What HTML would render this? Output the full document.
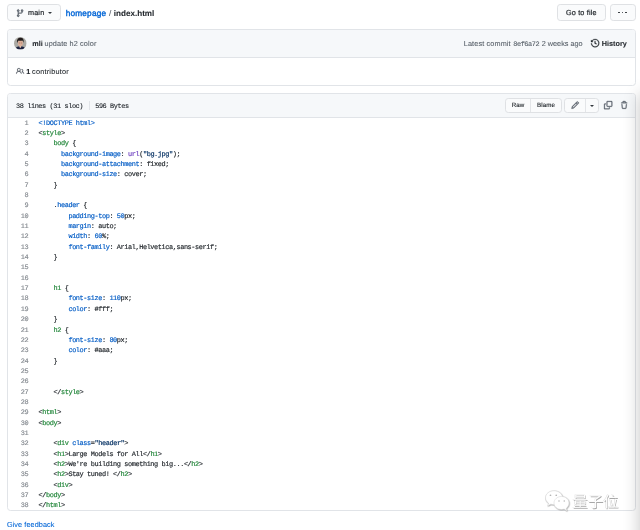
<!DOCTYPE html>
<html lang="en">
<head>
<meta charset="utf-8">
<title>homepage/index.html</title>
<style>
*{box-sizing:border-box;margin:0;padding:0}
html,body{width:640px;height:530px;overflow:hidden;background:#fff}
body{position:relative;text-rendering:geometricPrecision;font-family:"Liberation Sans","Noto Sans CJK SC",sans-serif;color:#24292e;font-size:7.25px;line-height:1}
#root{position:absolute;left:0;top:0;width:640px;height:530px;will-change:transform}
.abs{position:absolute;white-space:nowrap}
.btn{position:absolute;background:#fafbfc;border:1px solid #dfe1e4;border-radius:3.2px}
.box{position:absolute;border:1px solid #e1e4e8;border-radius:3.4px;background:#fff;overflow:hidden}
.hdr{position:absolute;left:0;right:0;top:0;background:#f6f8fa;border-bottom:1px solid #e1e4e8}
.t{position:absolute;white-space:nowrap;line-height:10px;height:10px;-webkit-text-stroke:0.08px currentColor}
.mono{font-family:"Liberation Mono",monospace}
.gray{color:#586069}
.blue{color:#0366d6}
.b6{font-weight:bold}
.dot{width:1.6px;height:1.6px;border-radius:50%;background:#24292e}
.med{-webkit-text-stroke:0.2px currentColor;color:#24292e}
.med.blue{color:#0366d6;-webkit-text-stroke-width:0.38px}
/* code */
#code{position:absolute;left:8px;top:118.63px;width:620px}
.ln{height:10.346px;line-height:10.346px;position:relative;white-space:pre;font-family:"Liberation Mono",monospace;font-size:6.9px;letter-spacing:-0.41px;color:#24292e;-webkit-text-stroke:0.17px currentColor}
.no{position:absolute;left:0;width:20.2px;text-align:right;color:#858a90;-webkit-text-stroke:0.16px currentColor}
.cd{position:absolute;left:30.6px}
.g{color:#22863a}.b{color:#005cc5}.s{color:#032f62}.p{color:#6f42c1}
svg{position:absolute;overflow:visible}
</style>
</head>
<body>
<div id="root">

<!-- top bar -->
<div class="btn" style="left:7px;top:4px;width:54px;height:17px"></div>
<svg style="left:16.2px;top:8.6px" width="8.3" height="8.3" viewBox="0 0 16 16"><path fill="#586069" stroke="#586069" stroke-width="0.55" fill-rule="evenodd" d="M11.75 2.5a.75.75 0 100 1.500.75.75 0 000-1.500zm-2.250.75a2.250 2.250 0 113 2.122V6A2.500 2.500 0 0110 8.500H6a1 1 0 00-1 1v1.128a2.251 2.251 0 11-1.500 0V5.372a2.250 2.250 0 111.500 0v1.836A2.492 2.492 0 016 7h4a1 1 0 001-1v-.628A2.250 2.250 0 019.500 3.250zM4.250 12a.75.75 0 100 1.500.75.75 0 000-1.500zM3.500 3.250a.75.75 0 111.500 0 .75.75 0 01-1.500 0z"/></svg>
<div class="t med" style="left:28px;top:7.8px;font-size:7.25px;letter-spacing:0.15px">main</div>
<div class="abs" style="left:48.3px;top:12.2px;width:0;height:0;border-left:2.1px solid transparent;border-right:2.1px solid transparent;border-top:2.3px solid #33383d"></div>
<div class="t med blue" style="left:65.7px;top:9.1px;font-size:8.28px;letter-spacing:0.19px">homepage</div><div class="t gray" style="left:108.9px;top:9.1px;font-size:8.28px">/</div><div class="t b6" style="left:113.8px;top:9.1px;font-size:8.1px">index.html</div>

<div class="btn" style="left:557px;top:4px;width:48.6px;height:17px"></div>
<div class="t med" style="left:566px;top:7.8px;font-size:7.25px;letter-spacing:0.16px">Go to file</div>
<div class="btn" style="left:610px;top:4px;width:25.6px;height:17px"></div>
<div class="abs dot" style="left:618.2px;top:11.8px"></div><div class="abs dot" style="left:621.8px;top:11.8px"></div><div class="abs dot" style="left:625.4px;top:11.8px"></div>

<!-- commit box -->
<div class="box" style="left:7px;top:29px;width:629px;height:56.5px">
  <div class="hdr" style="height:28px"></div>
</div>
<svg style="left:13.6px;top:37.2px" width="12.6" height="12.6" viewBox="0 0 126 126">
 <defs><clipPath id="avc"><circle cx="63" cy="63" r="63"/></clipPath><filter id="avb" x="-20%" y="-20%" width="140%" height="140%"><feGaussianBlur stdDeviation="4"/></filter></defs>
 <g clip-path="url(#avc)">
  <rect width="126" height="126" fill="#aaa9a4"/>
  <g filter="url(#avb)">
   <path d="M14 126c2-24 18-34 49-34s47 10 49 34z" fill="#1e2240"/>
   <path d="M53 84h20l-2 18-8 8-8-8z" fill="#e6c2ad"/>
   <ellipse cx="64" cy="60" rx="25" ry="31" fill="#dcae98"/>
   <path d="M32 60c-8-32 8-52 33-52 26 0 38 20 30 52-2-15-6-23-13-26-10 4-26 5-36 1-6 6-12 14-14 25z" fill="#231d1b"/>
   <path d="M48 60h12M68 60h12" stroke="#5a4038" stroke-width="4"/>
  </g>
 </g>
</svg>
<div class="t b6" style="left:32.2px;top:38.9px">mli</div><div class="t gray" style="left:44.5px;top:38.9px;letter-spacing:0.13px">update h2 color</div>
<div class="t gray" style="left:463.75px;top:38.9px;letter-spacing:0.146px">Latest commit</div><div class="t gray mono" style="left:513.2px;top:40.4px;font-size:6.9px;letter-spacing:-0.41px;-webkit-text-stroke:0.1px currentColor">8ef6a72</div><div class="t gray" style="left:541.8px;top:38.9px">2 weeks ago</div>
<svg style="left:591.1px;top:39.1px" width="8.3" height="8.3" viewBox="0 0 16 16"><path fill="#24292e" stroke="#24292e" stroke-width="0.55" fill-rule="evenodd" d="M1.643 3.143L.427 1.927A.25.25 0 000 2.104V5.750c0 .138.112.25.25.25h3.646a.25.25 0 00.177-.427L2.715 4.215a6.500 6.500 0 11-1.180 4.458.75.75 0 10-1.493.154 8.001 8.001 0 101.600-5.684zM7.750 4a.75.75 0 01.75.75v2.992l2.028.812a.75.75 0 01-.557 1.392l-2.500-1A.75.75 0 017 8.250v-3.500A.75.75 0 017.750 4z"/></svg>
<div class="t b6" style="left:601.8px;top:38.9px">History</div>

<svg style="left:15.6px;top:67.2px" width="8.3" height="8.3" viewBox="0 0 16 16"><path fill="#586069" stroke="#586069" stroke-width="0.2" fill-rule="evenodd" d="M5.500 3.500a2 2 0 100 4 2 2 0 000-4zM2 5.500a3.500 3.500 0 115.898 2.549 5.507 5.507 0 013.034 4.084.75.75 0 11-1.482.235 4.001 4.001 0 00-7.900 0 .75.75 0 01-1.482-.236A5.507 5.507 0 013.102 8.050 3.490 3.490 0 012 5.500zM11 4a.75.75 0 100 1.500 1.500 1.500 0 01.666 2.844.75.75 0 00-.416.672v.352a.75.75 0 00.574.730c1.200.289 2.162 1.200 2.522 2.372a.75.75 0 101.434-.440 5.010 5.010 0 00-2.560-3.012A3 3 0 0011 4z"/></svg>
<div class="t b6" style="left:26.2px;top:67.2px">1</div><div class="t" style="left:32.1px;top:67.2px;letter-spacing:0.22px">contributor</div>

<!-- file box -->
<div class="box" style="left:7px;top:93px;width:629px;height:417.5px">
  <div class="hdr" style="height:24px"></div>
</div>
<div class="t mono" style="left:16px;top:101.9px;font-size:6.9px;letter-spacing:-0.41px;-webkit-text-stroke:0.12px currentColor">38 lines (31 sloc)<span style="display:inline-block;width:12.1px"></span>596 Bytes</div>
<div class="abs" style="left:88.8px;top:100.5px;width:1px;height:9.5px;background:#e1e4e8"></div>

<div class="btn" style="left:505px;top:98.4px;width:56.8px;height:14.6px"></div>
<div class="abs" style="left:530px;top:99px;width:1px;height:13.4px;background:#e3e5e8"></div>
<div class="t med" style="left:511.8px;top:101.4px;font-size:6.21px;-webkit-text-stroke-width:0.12px">Raw</div>
<div class="t med" style="left:536.9px;top:101.4px;font-size:6.21px;letter-spacing:0.14px;-webkit-text-stroke-width:0.12px">Blame</div>
<div class="btn" style="left:564.4px;top:98.4px;width:34.4px;height:14.6px"></div>
<div class="abs" style="left:585.2px;top:99px;width:1px;height:13.4px;background:#e3e5e8"></div>
<svg style="left:570.6px;top:101.4px" width="8.3" height="8.3" viewBox="0 0 16 16"><path fill="#586069" stroke="#586069" stroke-width="0.55" fill-rule="evenodd" d="M11.013 1.427a1.750 1.750 0 012.474 0l1.086 1.086a1.750 1.750 0 010 2.474l-8.610 8.610c-.210.210-.470.364-.756.445l-3.251.930a.75.75 0 01-.927-.928l.929-3.250a1.750 1.750 0 01.445-.758l8.610-8.610zm1.414 1.060a.25.25 0 00-.354 0L10.811 3.750l1.439 1.440 1.263-1.263a.25.250 0 000-.354l-1.086-1.086zM11.189 6.250L9.750 4.810l-6.286 6.287a.25.25 0 00-.064.108l-.558 1.953 1.953-.558a.249.249 0 00.108-.064l6.286-6.286z"/></svg>
<div class="abs" style="left:590px;top:104.6px;width:0;height:0;border-left:2.1px solid transparent;border-right:2.1px solid transparent;border-top:2.3px solid #33383d"></div>
<svg style="left:604px;top:100.9px" width="8.3" height="8.3" viewBox="0 0 16 16"><path fill="#586069" stroke="#586069" stroke-width="0.55" fill-rule="evenodd" d="M0 6.750C0 5.784.784 5 1.750 5h1.500a.75.75 0 010 1.500h-1.500a.25.25 0 00-.25.25v7.500c0 .138.112.25.25.25h7.500a.25.25 0 00.25-.25v-1.500a.75.75 0 011.500 0v1.500A1.750 1.750 0 019.250 16h-7.500A1.750 1.750 0 010 14.250v-7.500z"/><path fill="#586069" stroke="#586069" stroke-width="0.55" fill-rule="evenodd" d="M5 1.750C5 .784 5.784 0 6.750 0h7.500C15.216 0 16 .784 16 1.750v7.500A1.750 1.750 0 0114.250 11h-7.500A1.750 1.750 0 015 9.250v-7.500zm1.750-.25a.25.25 0 00-.25.25v7.500c0 .138.112.25.25.25h7.500a.25.25 0 00.25-.25v-7.500a.25.25 0 00-.25-.25h-7.500z"/></svg>
<svg style="left:619.8px;top:100.9px" width="8.3" height="8.3" viewBox="0 0 16 16"><path fill="#586069" stroke="#586069" stroke-width="0.55" fill-rule="evenodd" d="M6.500 1.750a.25.25 0 01.25-.25h2.500a.25.25 0 01.25.25V3h-3V1.750zm4.500 0V3h2.250a.75.75 0 010 1.500H2.750a.75.75 0 010-1.500H5V1.750C5 .784 5.784 0 6.750 0h2.500C10.216 0 11 .784 11 1.750zM4.496 6.675a.75.75 0 10-1.492.150l.66 6.600A1.750 1.750 0 005.405 15h5.190c.9 0 1.652-.681 1.741-1.576l.66-6.600a.75.75 0 00-1.492-.149l-.66 6.600a.25.25 0 01-.249.225h-5.190a.25.25 0 01-.249-.225l-.66-6.600z"/></svg>

<div id="code">
<div class="ln"><span class="no">1</span><span class="cd"><span class="b">&lt;!DOCTYPE html&gt;</span></span></div>
<div class="ln"><span class="no">2</span><span class="cd">&lt;<span class="g">style</span>&gt;</span></div>
<div class="ln"><span class="no">3</span><span class="cd">    <span class="g">body</span> {</span></div>
<div class="ln"><span class="no">4</span><span class="cd">      <span class="b">background-image</span>: <span class="p">url</span>(<span class="s">"bg.jpg"</span>);</span></div>
<div class="ln"><span class="no">5</span><span class="cd">      <span class="b">background-attachment</span>: fixed;</span></div>
<div class="ln"><span class="no">6</span><span class="cd">      <span class="b">background-size</span>: cover;</span></div>
<div class="ln"><span class="no">7</span><span class="cd">    }</span></div>
<div class="ln"><span class="no">8</span><span class="cd"></span></div>
<div class="ln"><span class="no">9</span><span class="cd">    .<span class="b">header</span> {</span></div>
<div class="ln"><span class="no">10</span><span class="cd">        <span class="b">padding-top</span>: <span class="b">50</span>px;</span></div>
<div class="ln"><span class="no">11</span><span class="cd">        <span class="b">margin</span>: auto;</span></div>
<div class="ln"><span class="no">12</span><span class="cd">        <span class="b">width</span>: <span class="b">60</span>%;</span></div>
<div class="ln"><span class="no">13</span><span class="cd">        <span class="b">font-family</span>: Arial,Helvetica,sans-serif;</span></div>
<div class="ln"><span class="no">14</span><span class="cd">    }</span></div>
<div class="ln"><span class="no">15</span><span class="cd"></span></div>
<div class="ln"><span class="no">16</span><span class="cd"></span></div>
<div class="ln"><span class="no">17</span><span class="cd">    <span class="g">h1</span> {</span></div>
<div class="ln"><span class="no">18</span><span class="cd">        <span class="b">font-size</span>: <span class="b">110</span>px;</span></div>
<div class="ln"><span class="no">19</span><span class="cd">        <span class="b">color</span>: #fff;</span></div>
<div class="ln"><span class="no">20</span><span class="cd">    }</span></div>
<div class="ln"><span class="no">21</span><span class="cd">    <span class="g">h2</span> {</span></div>
<div class="ln"><span class="no">22</span><span class="cd">        <span class="b">font-size</span>: <span class="b">80</span>px;</span></div>
<div class="ln"><span class="no">23</span><span class="cd">        <span class="b">color</span>: #aaa;</span></div>
<div class="ln"><span class="no">24</span><span class="cd">    }</span></div>
<div class="ln"><span class="no">25</span><span class="cd"></span></div>
<div class="ln"><span class="no">26</span><span class="cd"></span></div>
<div class="ln"><span class="no">27</span><span class="cd">    &lt;/<span class="g">style</span>&gt;</span></div>
<div class="ln"><span class="no">28</span><span class="cd"></span></div>
<div class="ln"><span class="no">29</span><span class="cd">&lt;<span class="g">html</span>&gt;</span></div>
<div class="ln"><span class="no">30</span><span class="cd">&lt;<span class="g">body</span>&gt;</span></div>
<div class="ln"><span class="no">31</span><span class="cd"></span></div>
<div class="ln"><span class="no">32</span><span class="cd">    &lt;<span class="g">div</span> <span class="b">class</span>=<span class="s">"header"</span>&gt;</span></div>
<div class="ln"><span class="no">33</span><span class="cd">    &lt;<span class="g">h1</span>&gt;Large Models for All&lt;/<span class="g">h1</span>&gt;</span></div>
<div class="ln"><span class="no">34</span><span class="cd">    &lt;<span class="g">h2</span>&gt;We're building something big...&lt;/<span class="g">h2</span>&gt;</span></div>
<div class="ln"><span class="no">35</span><span class="cd">    &lt;<span class="g">h2</span>&gt;Stay tuned! &lt;/<span class="g">h2</span>&gt;</span></div>
<div class="ln"><span class="no">36</span><span class="cd">    &lt;<span class="g">div</span>&gt;</span></div>
<div class="ln"><span class="no">37</span><span class="cd">&lt;/<span class="g">body</span>&gt;</span></div>
<div class="ln"><span class="no">38</span><span class="cd">&lt;/<span class="g">html</span>&gt;</span></div>
</div>

<div class="t blue" style="left:6.9px;top:519.6px;font-size:7.25px;letter-spacing:0.1px">Give feedback</div>

<!-- watermark -->
<div class="abs" style="left:572.4px;top:492.2px;font-family:'Noto Sans CJK SC','WenQuanYi Zen Hei',sans-serif;font-size:15.4px;line-height:19px;color:#fdfdfd;text-shadow:0.6px 0.7px 0.4px #a8a8a8,-0.3px -0.3px 0.3px #d8d8d8">量子位</div>
<svg style="left:545px;top:489.5px" width="25" height="22.5" viewBox="0 0 50 45">
 <defs><filter id="wms" x="-10%" y="-10%" width="130%" height="130%"><feDropShadow dx="0.9" dy="1.1" stdDeviation="0.5" flood-color="#8a8a8a" flood-opacity="0.9"/></filter></defs>
 <g fill="#fff" stroke="#d6d6d6" stroke-width="1.1" filter="url(#wms)">
  <path d="M18 1.500C8.600 1.500 1 7.700 1 15.500c0 4.400 2.400 8.200 6.200 10.800L5.400 31.500l6.400-3.200c2 .6 4 1 6.200 1 9.400 0 17-6.200 17-13.800S27.400 1.500 18 1.500z"/>
  <path d="M33 13c-8.300 0-15 5.800-15 13s6.700 13 15 13c1.800 0 3.600-.3 5.200-.8L44 42l-1.600-5.200C45.800 34.400 48 30.400 48 26c0-7.200-6.700-13-15-13z"/>
 </g>
 <g fill="#b4b4b4"><circle cx="11" cy="10.500" r="1.700"/><circle cx="22.500" cy="10.500" r="1.700"/><circle cx="28" cy="22" r="1.500"/><circle cx="38.500" cy="22" r="1.500"/></g>
</svg>

<!-- right edge shade -->
<div class="abs" style="left:640px;top:94px;width:20px;height:460px;box-shadow:0 0 17px 0 rgba(0,0,0,0.23);pointer-events:none"></div>

</div>
</body>
</html>
